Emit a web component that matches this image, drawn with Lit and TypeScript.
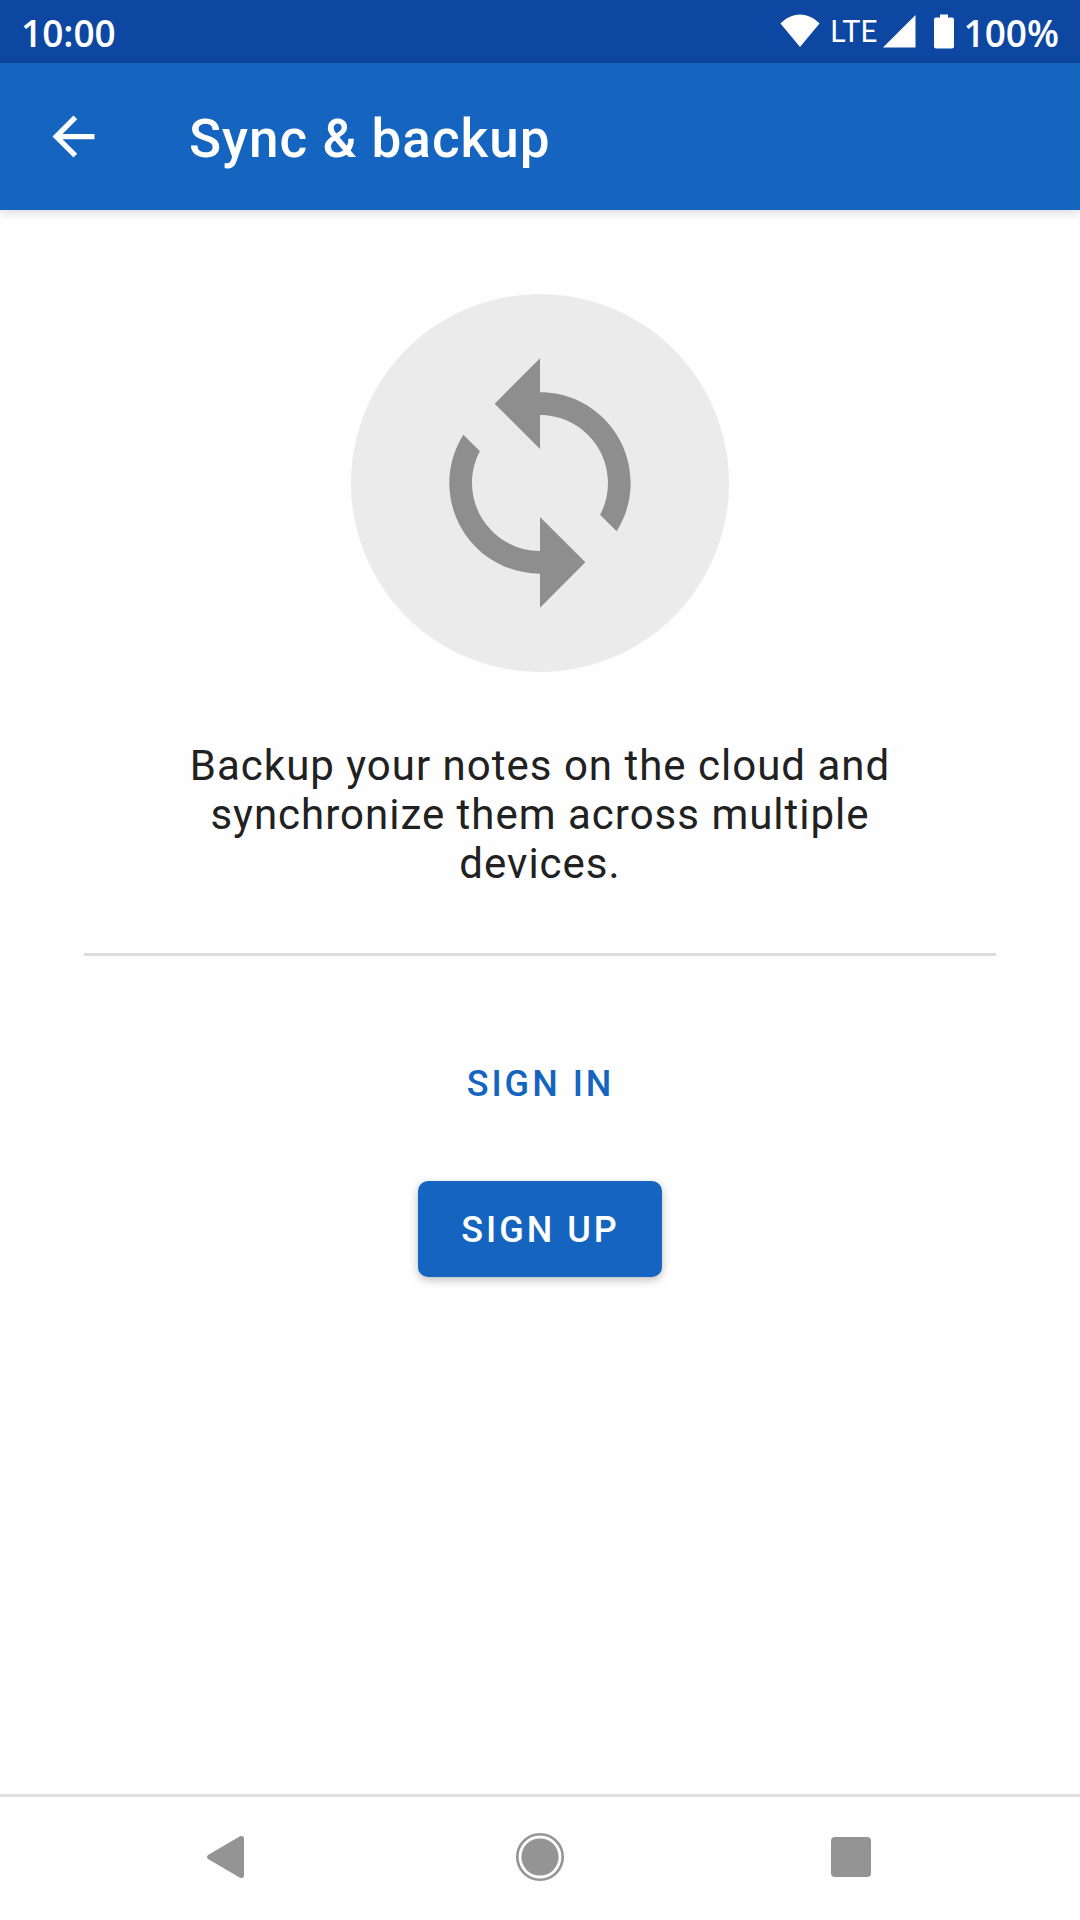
import { LitElement, html, css } from "lit";
import { customElement } from "lit/decorators.js";

@customElement("status-bar")
export class StatusBar extends LitElement {
  static styles = css`
    :host {
      display: flex;
      align-items: center;
      justify-content: space-between;
      box-sizing: border-box;
      height: 63px;
      padding: 0 21px;
      background: #0d47a1;
      color: #fff;
      font-family: "Open Sans", sans-serif;
      font-size: 37px;
      font-weight: 600;
      line-height: 63px;
    }
    .clock,
    .level {
      padding-top: 2px;
    }
    .indicators {
      display: flex;
      align-items: center;
    }
    .network {
      padding-bottom: 2px;
      margin: 0 5px 0 10px;
      font-family: Lato, sans-serif;
      font-size: 30px;
      font-weight: 400;
    }
    svg {
      display: block;
      fill: currentColor;
    }
    .battery {
      margin: 0 10px 0 18px;
    }
  `;

  render() {
    return html`
      <span class="clock">10:00</span>
      <div class="indicators">
        <svg width="40" height="36" viewBox="0 0 40 36" aria-hidden="true">
          <path d="M20 33 0.500 9.500C6 4 12.500 0.500 20 0.500s14 3.500 19.500 9z" />
        </svg>
        <span class="network">LTE</span>
        <svg width="33" height="36" viewBox="0 0 33 36" aria-hidden="true">
          <path d="M0 33.500 32.500 1v32.500z" />
        </svg>
        <svg class="battery" width="20" height="36" viewBox="0 0 20 36" aria-hidden="true">
          <path
            d="M6 0.500h8v3h4a2 2 0 0 1 2 2v27a2 2 0 0 1-2 2H2a2 2 0 0 1-2-2v-27a2 2 0 0 1 2-2h4z"
          />
        </svg>
        <span class="level">100%</span>
      </div>
    `;
  }
}

@customElement("top-bar")
export class TopBar extends LitElement {
  static styles = css`
    :host {
      display: flex;
      align-items: center;
      gap: 84px;
      box-sizing: border-box;
      height: 147px;
      padding: 0 42px;
      background: #1565c0;
      color: #fff;
      box-shadow: 0 2px 10px rgba(0, 0, 0, 0.16);
    }
    .back {
      padding: 0;
      border: 0;
      background: none;
      color: inherit;
      cursor: pointer;
    }
    svg {
      display: block;
      fill: currentColor;
    }
    .title {
      padding-top: 4px;
      margin: 0;
      font-size: 53px;
      font-weight: 500;
      line-height: 62px;
      letter-spacing: 1px;
    }
  `;

  render() {
    return html`
      <button class="back" type="button" aria-label="Navigate up">
        <svg width="63" height="63" viewBox="0 0 24 24" aria-hidden="true">
          <path d="M20 11H7.830l5.590-5.590L12 4l-8 8 8 8 1.410-1.410L7.830 13H20v-2z" />
        </svg>
      </button>
      <h1 class="title">Sync &amp; backup</h1>
    `;
  }
}

@customElement("sync-panel")
export class SyncPanel extends LitElement {
  static styles = css`
    :host {
      display: flex;
      flex-direction: column;
      align-items: center;
      padding: 84px;
    }
    .badge {
      display: flex;
      align-items: center;
      justify-content: center;
      width: 378px;
      height: 378px;
      border-radius: 50%;
      background: #ebebeb;
    }
    .badge svg {
      fill: #8e8e8e;
    }
    .message {
      max-width: 744px;
      margin: 69px 0 65px;
      color: #212121;
      font-size: 42px;
      line-height: 49px;
      letter-spacing: 1px;
      text-align: center;
    }
    .divider {
      align-self: stretch;
      height: 3px;
      margin: 0 0 79px;
      border: 0;
      background: #dcdcdc;
    }
    .actions {
      display: flex;
      flex-direction: column;
      align-items: center;
      gap: 50px;
    }
    .action {
      height: 96px;
      padding: 2px 42px 0 43px;
      border: 0;
      border-radius: 10px;
      background: none;
      color: #1565c0;
      font: inherit;
      font-size: 36px;
      font-weight: 500;
      line-height: 94px;
      letter-spacing: 3px;
      cursor: pointer;
    }
    .filled {
      background: #1565c0;
      color: #fff;
      box-shadow: 0 3px 8px rgba(0, 0, 0, 0.26);
    }
  `;

  render() {
    return html`
      <div class="badge">
        <svg width="272" height="272" viewBox="0 0 24 24" aria-hidden="true">
          <path
            d="M12 4V1L8 5l4 4V6c3.310 0 6 2.690 6 6 0 1.010-.250 1.970-.700 2.800l1.460 1.460C19.540 15.030 20 13.570 20 12c0-4.420-3.580-8-8-8zm0 14c-3.310 0-6-2.690-6-6 0-1.010.250-1.970.700-2.800L5.240 7.740C4.460 8.970 4 10.430 4 12c0 4.420 3.580 8 8 8v3l4-4-4-4v3z"
          />
        </svg>
      </div>
      <p class="message">Backup your notes on the cloud and synchronize them across multiple devices.</p>
      <hr class="divider" />
      <div class="actions">
        <button class="action" type="button">SIGN IN</button>
        <button class="action filled" type="button">SIGN UP</button>
      </div>
    `;
  }
}

@customElement("system-nav")
export class SystemNav extends LitElement {
  static styles = css`
    :host {
      display: grid;
      grid-template-columns: repeat(3, 1fr);
      box-sizing: border-box;
      height: 126px;
      padding: 0 72px 3px;
      border-top: 3px solid #e0e0e0;
    }
    .key {
      display: flex;
      align-items: center;
      justify-content: center;
      padding: 0;
      border: 0;
      background: none;
      color: #949494;
      cursor: pointer;
    }
    svg {
      display: block;
      fill: currentColor;
    }
  `;

  render() {
    return html`
      <button class="key" type="button" aria-label="Back">
        <svg width="48" height="48" viewBox="0 0 48 48" aria-hidden="true">
          <path d="M4 22 36 3.300Q40 2 40 5.500V42.500Q40 46 36 44.700L4 26Q2 24 4 22z" />
        </svg>
      </button>
      <button class="key" type="button" aria-label="Home">
        <svg width="48" height="48" viewBox="0 0 48 48" aria-hidden="true">
          <circle cx="24" cy="24" r="22.700" fill="none" stroke="currentColor" stroke-width="2.600" />
          <circle cx="24" cy="24" r="18.600" />
        </svg>
      </button>
      <button class="key" type="button" aria-label="Recent apps">
        <svg width="48" height="48" viewBox="0 0 48 48" aria-hidden="true">
          <rect x="3" y="4" width="40" height="40" rx="4" />
        </svg>
      </button>
    `;
  }
}

@customElement("app-root")
export class AppRoot extends LitElement {
  static styles = css`
    :host {
      display: flex;
      flex-direction: column;
      min-height: 100vh;
      background: #fefefe;
      font-family: Roboto, sans-serif;
    }
    .content {
      flex: 1;
    }
  `;

  render() {
    return html`
      <status-bar></status-bar>
      <top-bar></top-bar>
      <main class="content"><sync-panel></sync-panel></main>
      <system-nav></system-nav>
    `;
  }
}
